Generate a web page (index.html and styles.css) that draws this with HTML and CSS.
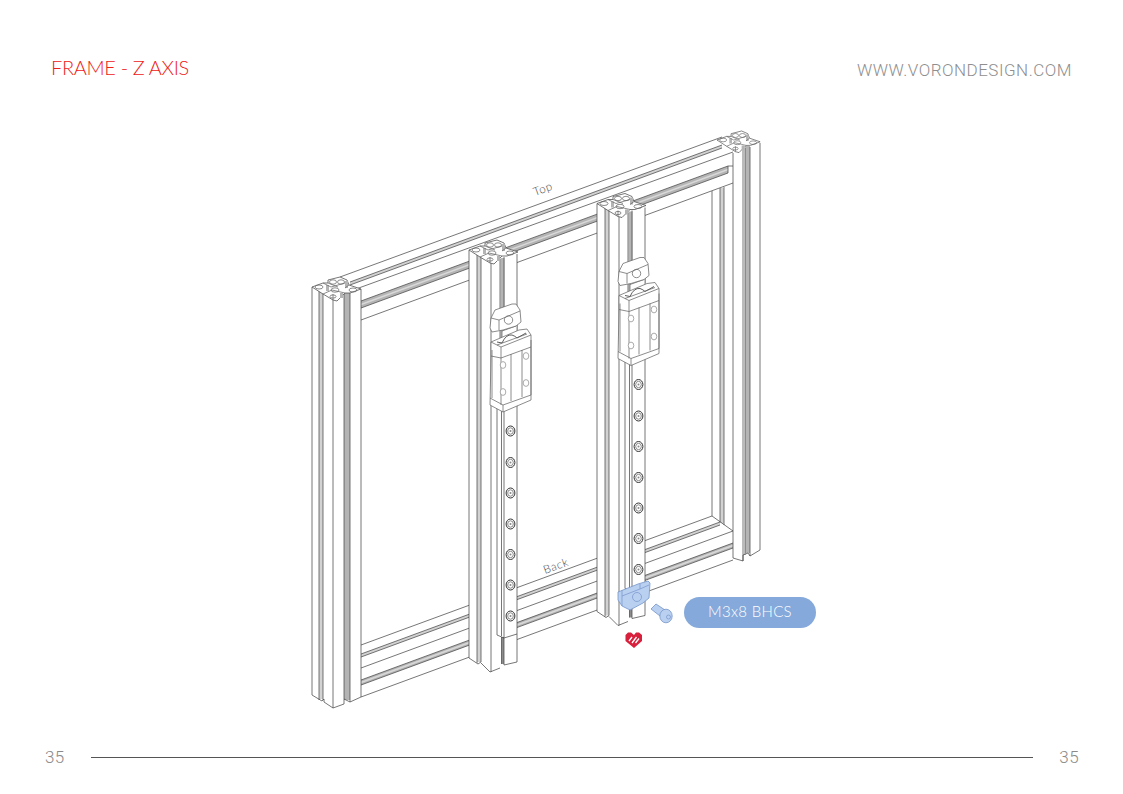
FILE: index.html
```html
<!DOCTYPE html>
<html lang="en">
<head>
<meta charset="utf-8">
<title>Frame - Z Axis</title>
<link rel="stylesheet" href="styles.css">
</head>
<body>
<div class="page">
  <header class="top">
    <h1 class="title">FRAME - Z AXIS</h1>
    <div class="site">WWW.VORONDESIGN.COM</div>
  </header>
  <main class="figure">
    <svg class="drawing" viewBox="0 100 1123 640" width="1123" height="640" aria-label="Z axis frame assembly">
      <defs>
        <g id="cap">
          <polygon class="w l" points="312,287 323,283 328,283 328,280 340,277 347,280 349,285 361,289 350,293 345,293 337,301 333,300 323,294"/>
          <path class="dg" d="M326,285 h3 v6 h-3 z M345,281 h3 v7 h-3 z M340,293 h3 v5 h-3 z"/>
          <path class="lc" d="M323,283 L331,287 L345,283 M328,283 L338,287 M323,294 L332,290 L345,293 M333,300 V294 M349,285 L345,288"/>
          <ellipse class="lc" cx="319" cy="287" rx="4" ry="2"/>
          <ellipse class="lc" cx="353" cy="290" rx="4" ry="2"/>
          <ellipse class="lc" cx="333" cy="282" rx="3.5" ry="2.2"/>
          <ellipse class="lc" cx="341" cy="282" rx="3.5" ry="2.2"/>
          <ellipse class="lc" cx="335" cy="290" rx="4" ry="2.2"/>
          <ellipse class="lc" cx="333" cy="296.5" rx="3" ry="1.6"/>
        </g>
        <g id="hole">
          <ellipse class="holeo" cx="0" cy="0" rx="4.4" ry="5"/>
          <ellipse class="lc" cx="0" cy="0" rx="2.8" ry="3.2"/>
          <circle class="holed" cx="0" cy="0" r="1"/>
        </g>
        <ellipse id="bolt" class="bolt" cx="0" cy="0" rx="2.8" ry="3.4"/>
        <g id="zaxis">
          <polygon class="w" points="469,250 517,254 517,662 504,665 500,668 490,672 481,663 478,664 469,658"/>
          <rect class="lg" x="477" y="252" width="4" height="410"/>
          <rect class="dg" x="500.5" y="258" width="4" height="90"/>
          <path class="l" d="M469,250 V658 L478,664 L481,662 V252 M477,252 V663 M481,663 L490,672 L500,668 M491,263 V672 M500,259 V400 M504,257 V345 M517,254 V330"/>
          <use href="#cap" transform="translate(157 -37)"/>
          <polygon class="w" points="497,400 497,635 504,638 517,634 517,395"/>
          <rect class="dk" x="501.5" y="637" width="2.5" height="27"/>
          <path class="l" d="M497,400 V635 L504,638 L517,634 V395 M501.5,400 V636 M504,400 V638"/>
          <path class="l" d="M501.5,637 V664 M504,638 V665 L517,662 V634"/>
          <use href="#hole" x="510.5" y="431"/>
          <use href="#hole" x="510.5" y="462.5"/>
          <use href="#hole" x="510.5" y="493"/>
          <use href="#hole" x="510.5" y="524"/>
          <use href="#hole" x="510.5" y="554.5"/>
          <use href="#hole" x="510.5" y="585"/>
          <use href="#hole" x="510.5" y="616"/>
          <polygon class="w lc" points="502,325 502,346 517,340 517,320"/>
          <path class="lc" d="M502,331 L516,326"/>
          <polygon class="w lc" points="491,342 519,330 527,329 531,335 531,400 503,412 490,405 491,356"/>
          <path class="lc" d="M491,342 L501,347 L531,335 M501,347 V358 L531,347 M491,356 L501,358 M492,350 V398 M501,358 V405 M511,354 V401 M522,350 V397 M531,340 V395 M490,398 L503,405 L531,395 M503,405 V412"/>
          <path class="ld" d="M497,342 L502,343 Q506,334 512,335 Q515,336 517,338 L526,333"/>
          <path class="lc" d="M497,345 L527,334"/>
          <use href="#bolt" x="503" y="365"/>
          <use href="#bolt" x="503" y="392"/>
          <use href="#bolt" x="526" y="356"/>
          <use href="#bolt" x="526" y="383"/>
          <polygon class="w lc" points="491,318 495,310 512,304 516,304 520,310 521,322 516,326 503,330 492,332 490,328"/>
          <path class="lc" d="M491,318 L499,320 L520,311 M499,320 V330"/>
          <circle class="lc" cx="508.5" cy="320" r="4.2"/>
        </g>
      </defs>

      <path class="l" d="M340,277 L722,137"/>
      <polygon class="lg" points="350,282 722,145 722,148 350,285"/>
      <path class="l" d="M350,282 L722,145 M350,285 L722,148"/>
      <path class="l" d="M356,289 L733,152"/>
      <polygon class="dg" points="361,301 728,166 728,173 361,308"/>
      <path class="band" d="M361,304.5 L728,169.5"/>
      <path class="l" d="M361,301 L728,166 M361,308 L728,173 M728,166 V173 M728,166 L733,166"/>
      <path class="l" d="M361,320 L733,183"/>

      <path class="l" d="M361,645 L712,516"/>
      <polygon class="lg" points="361,654 720,522 720,525 361,657"/>
      <path class="l" d="M361,654 L720,522 M361,657 L720,525"/>
      <path class="l" d="M361,668 L733,531"/>
      <polygon class="dg" points="361,680 733,543 733,548 361,685"/>
      <path class="band" d="M361,682.5 L733,545.5"/>
      <path class="l" d="M361,680 L733,543 M361,685 L733,548"/>
      <path class="l" d="M361,697 L733,560"/>

      <rect class="lg" x="720" y="188" width="4" height="335"/>
      <path class="l" d="M712,191 V516 L733,531 M720,188 V522 M724,187 V525"/>

      <polygon class="w" points="733,150 760,143 760,550 748,553 745,555 743,555 733,558"/>
      <rect class="dg" x="745" y="146" width="5" height="407"/>
      <path class="l" d="M733,153 V558 L743,561 V555 L748,553 L750,556 L760,550 V143 M743,150 V561 M745,148 V555 M750,147 V556"/>
      <use href="#cap" transform="translate(717 140) scale(.88 .9) translate(-312 -287)"/>

      <polygon class="w" points="312,287 361,289 361,697 350,702 344,699 344,704 333,708 324,702 324,699 322,701 312,695"/>
      <rect class="lg" x="319" y="289" width="4" height="410"/>
      <rect class="dg" x="344" y="293" width="6" height="407"/>
      <path class="l" d="M312,287 V695 L322,701 L324,699 V702 L333,708 L344,704 V699 L350,702 L361,697 V289 M319,289 V700 M323,288 V700 M333,300 V708 M344,294 V699 M350,293 V702"/>
      <use href="#cap"/>

      <use href="#zaxis"/>
      <use href="#zaxis" transform="translate(128 -46.5)"/>

      <text class="note" transform="translate(535 196) rotate(-20)">Top</text>
      <text class="note" transform="translate(545 574) rotate(-20)">Back</text>

      <polygon class="blue" points="618,592 638,584 648,581 650,583 649,598 643,603 630,610 622,606 618,600"/>
      <path class="blueline" d="M622,590 V606 M622,596 L640,589 V584 M640,589 L649,585"/>
      <circle class="blueline" cx="637" cy="597" r="4.5"/>

      <polygon class="blue" points="651,609 656,604 665,610 660,616"/>
      <ellipse class="blue" cx="666" cy="616" rx="6.2" ry="6.8"/>
      <circle class="blueline" cx="668.5" cy="617" r="2"/>

      <polygon class="heart" points="625.5,635 628,632.5 631,632.5 634,635 636,632.5 639,632.5 642,635 642,641 634,648 625.5,641"/>
      <path class="slash" d="M629,641 L632,637 M632,643 L636.5,637 M635.5,643 L639,638.5"/>

      <rect class="pill" x="684" y="597" width="132" height="31" rx="15.5"/>
      <text class="pill-text" x="750" y="617">M3x8 BHCS</text>
    </svg>
  </main>
  <footer class="bottom">
    <span class="num">35</span>
    <span class="rule"></span>
    <span class="num">35</span>
  </footer>
</div>
</body>
</html>
```

FILE: styles.css
```css
html, body {
  margin: 0;
  padding: 0;
  background: #fff;
}
.page {
  width: 1123px;
  height: 794px;
  display: flex;
  flex-direction: column;
  overflow: hidden;
  font-family: "Lato", "Liberation Sans", sans-serif;
}
.top {
  height: 100px;
  box-sizing: border-box;
  display: flex;
  justify-content: space-between;
  align-items: flex-start;
  padding: 55px 51px 0 51px;
}
.title {
  margin: 0;
  font-size: 20px;
  line-height: 24px;
  font-weight: 300;
  color: #ee2018;
  letter-spacing: -0.35px;
}
.site {
  font-family: "Roboto", "Liberation Sans", sans-serif;
  font-weight: 300;
  font-size: 17px;
  line-height: 28px;
  margin-top: 1px;
  color: #8f8f8f;
  letter-spacing: 0.5px;
}
.figure {
  height: 640px;
}
.drawing {
  display: block;
}
.bottom {
  display: flex;
  align-items: center;
  gap: 26px;
  padding: 7px 44px 0 45px;
}
.num {
  font-family: "Roboto", "Liberation Sans", sans-serif;
  font-weight: 300;
  font-size: 17px;
  line-height: 20px;
  color: #8a8a8a;
  letter-spacing: 0.4px;
}
.rule {
  flex: 1;
  height: 1px;
  background: #555;
}
.l {
  fill: none;
  stroke: #4a4a4a;
  stroke-width: 0.75;
}
.lc {
  fill: none;
  stroke: #666;
  stroke-width: 0.75;
}
.w.l,
.w.lc,
.w {
  fill: #fff;
}
.ld {
  fill: none;
  stroke: #333;
  stroke-width: 0.8;
}
.lg {
  fill: #d2d2d2;
}
.dg {
  fill: #b4b4b4;
}
.band {
  fill: none;
  stroke: #d8d8d8;
  stroke-width: 1.5;
}
.dk {
  fill: #8c8c8c;
}
.holeo {
  fill: #fff;
  stroke: #333;
  stroke-width: 1;
}
.holed {
  fill: #888;
}
.bolt {
  fill: #fff;
  stroke: #888;
  stroke-width: 0.7;
}
.note {
  font-family: "Lato", "Liberation Sans", sans-serif;
  font-size: 11.5px;
  font-weight: 300;
  fill: #444;
  letter-spacing: 0.6px;
}
.blue {
  fill: #b9d0f1;
  stroke: #7594c8;
  stroke-width: 0.8;
}
.blueline {
  fill: none;
  stroke: #7d9bce;
  stroke-width: 0.8;
}
.heart {
  fill: #d81f3b;
}
.slash {
  fill: none;
  stroke: #fff;
  stroke-width: 1.3;
}
.pill {
  fill: #85a9da;
}
.pill-text {
  font-family: "Lato", "Liberation Sans", sans-serif;
  font-size: 15px;
  font-weight: 300;
  fill: #fff;
  text-anchor: middle;
  letter-spacing: 0.3px;
}
```
